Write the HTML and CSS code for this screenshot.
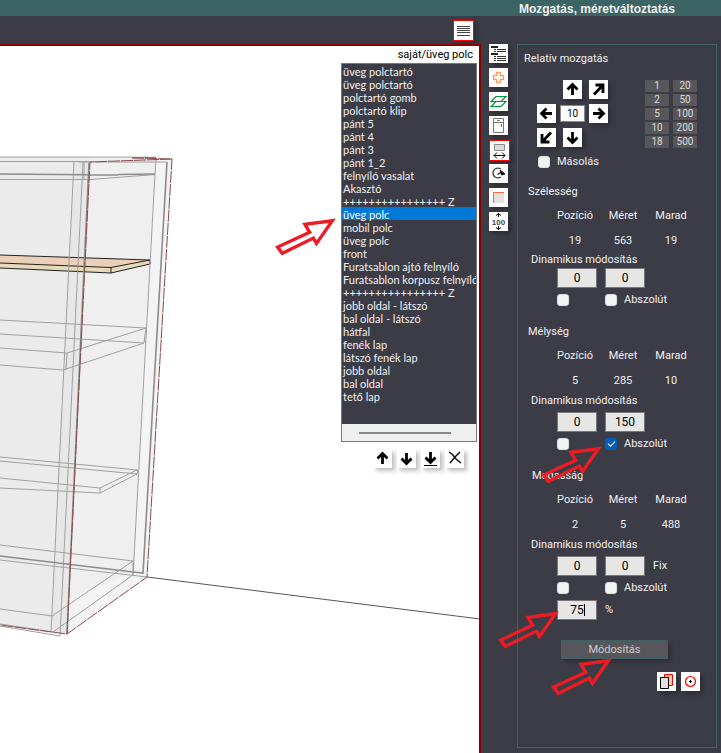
FILE: index.html
```html
<!DOCTYPE html>
<html lang="hu">
<head>
<meta charset="utf-8">
<title>Mozgatás, méretváltoztatás</title>
<link rel="stylesheet" href="styles.css">
</head>
<body>
<svg width="0" height="0" class="defs" aria-hidden="true">
  <symbol id="up" viewBox="0 0 19 19"><path d="M9.500 15V4.500M4.500 9.500l5-5 5 5" fill="none" stroke="#000" stroke-width="2.800"/></symbol>
  <symbol id="diag" viewBox="0 0 19 19"><path d="M5 14.500L14 5M6.500 5H14v8" fill="none" stroke="#000" stroke-width="2.800"/></symbol>
  <symbol id="pointer" viewBox="0 0 62 38"><path d="M56 4.500L30 8l4.500 7.500L4 29.500l4.500 6L38 21l3 5z" fill="none" stroke="#ed1c24" stroke-width="3.200"/></symbol>
</svg>
<div class="app">
  <header class="titlebar"><h1>Mozgatás, méretváltoztatás</h1></header>
  <div class="toolbar">
    <button class="tool active" aria-label="Lista"><svg viewBox="0 0 19 19"><path d="M3 5.500h13M3 7.500h13M3 9.500h13M3 11.500h13M3 14.500h13" stroke="#444"/></svg></button>
  </div>
  <main class="view">
    <svg class="scene" width="480" height="708" viewBox="0 46 480 708" aria-hidden="true">
      <path d="M0 157l172 2-25 418-82 58-65-8z" fill="#f4f4f4"/>
      <path d="M0 157h156l-23 416L0 625z" fill="#efefef"/>
      <path d="M0 157h90L67 634 0 625z" fill="#ebebeb"/>
      <path d="M74 161h16L67 634l-15-2z" fill="#e7e7e7"/>
      <path d="M0 255l150 5v4l-39 8-111-9z" fill="#ebcfb8"/>
      <path d="M0 263l111 5 39-8v4l-39 9-111-5z" fill="#e6d9b9"/>
      <path d="M0 255l150 5v4l-39 9-111-5M0 263l111 4.500 39-7.500M111 267v6" fill="none" stroke="#222"/>
      <g fill="none" stroke="#a0a0a0">
        <path d="M0 157h132M0 161.500h90M0 179.500h90l65-5M74 161L51 632M83 162L60 636M156 159l-1 15-22 402M84 161v18M79 162h88"/>
        <path d="M0 320l146 8-2 15-144-9M0 348l67 5 79-25M0 365l63 5 81-27M67 353l-1 17"/>
        <path d="M0 457l138 13-1 4-137-13M0 478l100 10v5L0 488M100 488l37-18M100 493l37-19"/>
        <path d="M0 545l133 16-81 55-52-7M0 560l147 17M133 561v14l-80 57-53-8M0 626l60 10"/>
      </g>
      <path d="M0 174l118 1M118 174.500l37-.5M132 157.500h24M167 162l-24 411-10-1L0 556M89 163L67 634" fill="none" stroke="#8c8c8c" stroke-width="1.600"/>
      <path d="M132 158l40 1-25 418-80 57L0 625M172 159l-82 3-23 472" fill="none" stroke="#8a4a4e" stroke-dasharray="12 1"/>
      <path d="M147 577l333 42" stroke="#555"/>
    </svg>
    <div class="parts">
      <label class="path" for="parts">saját/üveg polc</label>
      <div class="listbox">
        <select id="parts" size="26">
          <option>üveg polctartó</option><option>üveg polctartó</option><option>polctartó gomb</option><option>polctartó klip</option>
          <option>pánt 5</option><option>pánt 4</option><option>pánt 3</option><option>pánt 1_2</option>
          <option>felnyíló vasalat</option><option>Akasztó</option><option>++++++++++++++++ Z</option>
          <option selected>üveg polc</option><option>mobil polc</option><option>üveg polc</option><option>front</option>
          <option>Furatsablon ajtó felnyíló</option><option>Furatsablon korpusz felnyíló</option><option>++++++++++++++++ Z</option>
          <option>jobb oldal - látszó</option><option>bal oldal - látszó</option><option>hátfal</option><option>fenék lap</option>
          <option>látszó fenék lap</option><option>jobb oldal</option><option>bal oldal</option><option>tető lap</option>
        </select>
        <div class="scroll"></div>
      </div>
      <div class="order">
        <button class="tool" aria-label="Fel"><svg><use href="#up"/></svg></button>
        <button class="tool" aria-label="Le"><svg class="r180"><use href="#up"/></svg></button>
        <button class="tool" aria-label="Legalulra"><svg viewBox="0 0 19 19"><path d="M9.500 3v10M4.500 8.500l5 5 5-5" fill="none" stroke="#000" stroke-width="2.800"/><path d="M3 16.500h13" stroke="#000"/></svg></button>
        <button class="tool" aria-label="Törlés"><svg viewBox="0 0 19 19"><path d="M4 3l3 2 4 5 5 4M15 3l-5 5-5 6" fill="none" stroke="#111" stroke-width="1.500"/></svg></button>
      </div>
    </div>
  </main>
  <aside class="side">
    <nav class="tools">
      <button class="tool" aria-label="Szerkezet"><svg viewBox="0 0 19 19"><path d="M2 3h7M2 10h7" stroke="#222" stroke-width="2"/><path d="M5 5.500h2M8 5.500h9M5 7.500h2M8 7.500h9M5 12.500h2M8 12.500h9M5 14.500h2M8 14.500h9M5 16.500h2M8 16.500h9" stroke="#333"/></svg></button>
      <button class="tool" aria-label="Hozzáadás"><svg viewBox="0 0 19 19"><path d="M7.500 4.500h4v3h3v4h-3v3h-4v-3h-3v-4h3z" fill="none" stroke="#ff9a66" stroke-width="1.300"/></svg></button>
      <button class="tool" aria-label="Lapok"><svg viewBox="0 0 19 19"><path d="M7 4.500h10l-5 5H2zM7 9.500h10l-5 5H2z" fill="none" stroke="#00963c" stroke-width="1.200"/></svg></button>
      <button class="tool" aria-label="Ajtó"><svg viewBox="0 0 19 19"><path d="M4.500 2.500h10v14h-10zM4.500 6.500h10M8 4.500h3M12.500 8v3" fill="none" stroke="#777"/></svg></button>
      <button class="tool active" aria-label="Méret"><svg viewBox="0 0 19 19"><path d="M4.500 3.500h10v6h-10z" fill="#ddd" stroke="#888"/><path d="M4 14.500h11M7 11.500l-3 3 3 3M12 11.500l3 3-3 3" fill="none" stroke="#000"/></svg></button>
      <button class="tool" aria-label="Forgatás"><svg viewBox="0 0 19 19"><path d="M12 5C8 3 4 5 4 9s4 6 8 4" fill="none" stroke="#444" stroke-width="1.300"/><path d="M8.500 10.500l4-2.500" stroke="#222" stroke-width="1.300"/><path d="M11 6l5 4-3.500 1z" fill="#111" stroke="#111"/></svg></button>
      <button class="tool" aria-label="Él"><svg viewBox="0 0 19 19"><path d="M5 5h10v10H5z" fill="#e2e2e2"/><path d="M4.500 15V4.500H15" fill="none" stroke="#ff6a3c"/></svg></button>
      <button class="tool" aria-label="Magasság 100"><svg viewBox="0 0 19 19"><path d="M9.500 1v4M7 3.500l2.500-2 2.500 2M9.500 14v4M7 15.500l2.500 2 2.500-2" fill="none" stroke="#000"/><text x="9.500" y="12.500" text-anchor="middle" class="hundred">100</text></svg></button>
    </nav>
    <form class="panel">
      <h2>Relatív mozgatás</h2>
      <div class="move">
        <div class="pad">
          <span></span><button type="button" class="tool" aria-label="Fel"><svg><use href="#up"/></svg></button><button type="button" class="tool" aria-label="Hátra"><svg><use href="#diag"/></svg></button>
          <button type="button" class="tool" aria-label="Balra"><svg class="r270"><use href="#up"/></svg></button><input class="step" aria-label="Lépés" value="10"><button type="button" class="tool" aria-label="Jobbra"><svg class="r90"><use href="#up"/></svg></button>
          <button type="button" class="tool" aria-label="Előre"><svg class="r180"><use href="#diag"/></svg></button><button type="button" class="tool" aria-label="Le"><svg class="r180"><use href="#up"/></svg></button>
        </div>
        <div class="steps">
          <button type="button">1</button><button type="button">20</button><button type="button">2</button><button type="button">50</button><button type="button">5</button><button type="button">100</button><button type="button">10</button><button type="button">200</button><button type="button">18</button><button type="button">500</button>
        </div>
      </div>
      <label class="copy"><input type="checkbox"><span>Másolás</span></label>

      <section class="axis tight">
        <h3>Szélesség</h3>
        <table><thead><tr><th>Pozíció</th><th>Méret</th><th>Marad</th></tr></thead><tbody><tr><td>19</td><td>563</td><td>19</td></tr></tbody></table>
        <h4>Dinamikus módosítás</h4>
        <div class="fields"><input aria-label="Pozíció módosítás" value="0"><input aria-label="Méret módosítás" value="0"></div>
        <div class="checks"><input type="checkbox" aria-label="Pozíció abszolút"><label><input type="checkbox"><span>Abszolút</span></label></div>
      </section>
      <section class="axis">
        <h3>Mélység</h3>
        <table><thead><tr><th>Pozíció</th><th>Méret</th><th>Marad</th></tr></thead><tbody><tr><td>5</td><td>285</td><td>10</td></tr></tbody></table>
        <h4>Dinamikus módosítás</h4>
        <div class="fields"><input aria-label="Pozíció módosítás" value="0"><input aria-label="Méret módosítás" value="150"></div>
        <div class="checks"><input type="checkbox" aria-label="Pozíció abszolút"><label><input type="checkbox" checked><span>Abszolút</span></label><svg class="pointer at-check"><use href="#pointer"/></svg></div>
      </section>
      <section class="axis">
        <h3 class="inset">Magasság</h3>
        <table><thead><tr><th>Pozíció</th><th>Méret</th><th>Marad</th></tr></thead><tbody><tr><td>2</td><td>5</td><td>488</td></tr></tbody></table>
        <h4>Dinamikus módosítás</h4>
        <div class="fields"><input aria-label="Pozíció módosítás" value="0"><input id="fix" value="0"><label for="fix">Fix</label></div>
        <div class="checks"><input type="checkbox" aria-label="Pozíció abszolút"><label><input type="checkbox"><span>Abszolút</span></label></div>
        <div class="fields percent"><input id="percent" value="75"><label for="percent">%</label><i class="caret"></i><svg class="pointer at-percent"><use href="#pointer"/></svg></div>
      </section>
      <div class="submit"><button type="button">Módosítás</button><svg class="pointer at-submit"><use href="#pointer"/></svg></div>
      <div class="extras">
        <button type="button" class="tool" aria-label="Másolat"><svg viewBox="0 0 19 19"><path d="M7.500 2.500h8v11h-8z" fill="#ffc89a" stroke="red"/><path d="M3.500 5.500h8v11h-8z" fill="#e2e2e2" stroke="#000"/></svg></button>
        <button type="button" class="tool" aria-label="Középpont"><svg viewBox="0 0 19 19"><circle cx="9.500" cy="9.500" r="5" fill="none" stroke="red" stroke-width="1.200"/><path d="M8 9.500h3M9.500 8v3" stroke="#000"/></svg></button>
      </div>
    </form>
  </aside>
  <svg class="pointer at-list"><use href="#pointer"/></svg>
</div>
</body>
</html>
```
FILE: styles.css
```css
* { box-sizing: border-box; }
body, h1, h2, h3, h4 { margin: 0; font-weight: normal; }
body, button, input {
  font-family: Roboto, "Liberation Sans", sans-serif;
  font-size: 11px;
}
body { background: #3c3c46; color: #f0f0f0; line-height: 14px; }
h2, h3, h4 { font-size: 11px; }
button, input { padding: 0; margin: 0; }
svg { display: block; }
.defs { position: absolute; }
.app {
  position: relative;
  display: grid;
  grid-template-columns: minmax(0, 1fr) 240px;
  grid-template-rows: 16px 28px minmax(709px, 1fr);
  min-height: 100vh;
}
.titlebar { grid-column: 1 / 3; background: #3c6464; display: flex; justify-content: flex-end; padding-right: 46px; }
.titlebar h1 { font: bold 12px/18px "Liberation Sans", sans-serif; }
.toolbar { grid-column: 1 / 3; display: flex; justify-content: flex-end; padding: 4px 247px 0 0; }

.tool { width: 19px; height: 19px; border: 0; background: #fff; box-shadow: 3px 3px 4px rgba(0, 0, 0, .25); }
.tool svg { width: 19px; height: 19px; }
.tool.active { width: 21px; height: 21px; border: 1px solid red; }
.hundred { font: bold 8px "Liberation Sans", sans-serif; fill: #444; }
.r90 { transform: rotate(90deg); }
.r180 { transform: rotate(180deg); }
.r270 { transform: rotate(270deg); }

.view { position: relative; background: #fff; border-top: 2px solid #8c0000; border-right: 2px solid #8c0000; padding: 1px 2px 0 0; overflow: hidden; }
.scene { position: absolute; left: 0; top: 0; }
.parts { position: relative; width: 136px; margin-left: auto; }
.path { display: block; color: #000; text-align: right; padding-right: 4px; line-height: 16px; }
.listbox { border: 1px solid #777; background: #3c3c46; }
select { display: block; width: 100%; height: 360px; padding: 0; border: 0; outline: 0; border-radius: 0; background: #3c3c46; color: #f0f0f0; overflow: hidden; font-family: Lato, "Liberation Sans", sans-serif; font-size: 11px; }
option { padding: 1px 0 0 1px; min-height: 13px; height: 13px; line-height: 12px; color: #f0f0f0; }
option:checked { background: #0078d7 linear-gradient(#0078d7, #0078d7); color: #fff; }
.scroll { height: 17px; background: #f0f0f0; padding: 8px 25px 0 17px; }
.scroll::before { content: ""; display: block; height: 2px; background: #888; }
.order { display: flex; gap: 5px; padding: 7px 0 0 32px; }

.side { display: flex; gap: 9px; padding: 0 4px 5px 8px; }
.tools { display: grid; grid-auto-rows: 19px; gap: 5px; align-content: start; width: 19px; }
.panel { flex: 1; border: 1px solid #3c6464; padding: 7px 0 0 6px; min-width: 0; }
.move { display: flex; gap: 37px; padding: 14px 0 0 13px; }
.pad { display: grid; grid-template-columns: 19px 19px 19px; grid-auto-rows: 19px; gap: 5px 7px; width: 71px; }
.step { width: 25px; height: 17px; justify-self: center; align-self: center; text-align: center; border: 1px solid #888; background: #fff; font-size: 10px; }
.steps { display: grid; grid-template-columns: 24px 24px; grid-auto-rows: 12px; gap: 2px 4px; }
.steps button { border: 0; background: #57565a; color: #ddd; font-size: 10px; line-height: 12px; }
label { display: flex; align-items: center; }
.copy { gap: 7px; height: 14px; margin: 7px 0 0 14px; }
input[type=checkbox] { appearance: none; width: 12px; height: 12px; border-radius: 3px; background: #f3f3f3; border: 1px solid #ddd; }
input[type=checkbox]:checked { background: #005fb8; border-color: #005fb8; }
input[type=checkbox]:checked::before { content: ""; display: block; width: 6px; height: 3px; margin: 2px; border: solid #fff; border-width: 0 0 1px 1px; transform: rotate(-45deg); }

.axis { padding-left: 4px; margin-top: 8px; }
.tight { margin-top: 11px; }
.axis h3 { line-height: 24px; }
.axis .inset { padding-left: 4px; }
table { border-collapse: collapse; table-layout: fixed; width: 144px; margin-left: 23px; }
th, td { padding: 0; font-weight: normal; text-align: center; }
th { height: 24px; }
td { height: 26px; }
h4 { padding-left: 3px; }
.tight h4 { margin-top: -1px; }
.fields { position: relative; display: flex; gap: 8px; padding: 4px 0 0 29px; }
.tight .fields { padding-top: 1px; }
.fields input { width: 40px; height: 20px; border: 1px solid #777; background: #e6e6e6; color: #000; text-align: center; font-size: 12px; }
.checks { position: relative; display: flex; align-items: center; gap: 36px; height: 24px; padding-left: 29px; }
.checks label { gap: 7px; }
.percent { padding-top: 0; }
.caret { position: absolute; left: 56px; top: 4px; width: 1px; height: 12px; background: #000; }
.submit { position: relative; padding: 20px 0 0 37px; }
.submit button { display: block; width: 107px; height: 19px; border: 1px solid #3c6464; background: #57565a; color: #ccc; box-shadow: 3px 3px 4px rgba(0, 0, 0, .25); }
.extras { display: flex; justify-content: flex-end; gap: 5px; padding: 13px 16px 0 0; }

.pointer { position: absolute; width: 66px; height: 40px; pointer-events: none; }
.at-list { right: 382px; top: 216px; }
.at-check { left: 11px; top: 12px; }
.at-percent { left: -32px; top: 9px; }
.at-submit { left: 25px; top: 36px; }
```
